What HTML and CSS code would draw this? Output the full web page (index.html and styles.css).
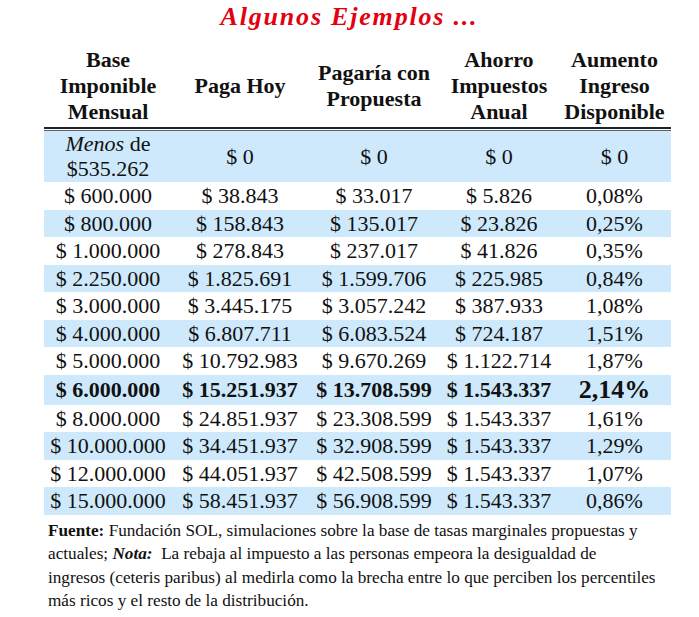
FILE: index.html
```html
<!DOCTYPE html>
<html lang="es">
<head>
<meta charset="utf-8">
<title>Algunos Ejemplos</title>
<link rel="stylesheet" href="styles.css">
</head>
<body>
<div class="page">
  <h1 class="title">Algunos Ejemplos ...</h1>
  <table class="data">
    <colgroup>
      <col class="c1"><col class="c2"><col class="c3"><col class="c4"><col class="c5">
    </colgroup>
    <thead>
      <tr>
        <th>Base<br>Imponible<br>Mensual</th>
        <th>Paga Hoy</th>
        <th>Pagaría con<br>Propuesta</th>
        <th>Ahorro<br>Impuestos<br>Anual</th>
        <th>Aumento<br>Ingreso<br>Disponible</th>
      </tr>
    </thead>
    <tbody>
      <tr class="first blue">
        <td class="two"><em>Menos</em> de<br>$535.262</td>
        <td>$ 0</td><td>$ 0</td><td>$ 0</td><td>$ 0</td>
      </tr>
      <tr><td>$ 600.000</td><td>$ 38.843</td><td>$ 33.017</td><td>$ 5.826</td><td>0,08%</td></tr>
      <tr class="blue"><td>$ 800.000</td><td>$ 158.843</td><td>$ 135.017</td><td>$ 23.826</td><td>0,25%</td></tr>
      <tr><td>$ 1.000.000</td><td>$ 278.843</td><td>$ 237.017</td><td>$ 41.826</td><td>0,35%</td></tr>
      <tr class="blue"><td>$ 2.250.000</td><td>$ 1.825.691</td><td>$ 1.599.706</td><td>$ 225.985</td><td>0,84%</td></tr>
      <tr><td>$ 3.000.000</td><td>$ 3.445.175</td><td>$ 3.057.242</td><td>$ 387.933</td><td>1,08%</td></tr>
      <tr class="blue"><td>$ 4.000.000</td><td>$ 6.807.711</td><td>$ 6.083.524</td><td>$ 724.187</td><td>1,51%</td></tr>
      <tr><td>$ 5.000.000</td><td>$ 10.792.983</td><td>$ 9.670.269</td><td>$ 1.122.714</td><td>1,87%</td></tr>
      <tr class="blue strong"><td>$ 6.000.000</td><td>$ 15.251.937</td><td>$ 13.708.599</td><td>$ 1.543.337</td><td class="big">2,14%</td></tr>
      <tr><td>$ 8.000.000</td><td>$ 24.851.937</td><td>$ 23.308.599</td><td>$ 1.543.337</td><td>1,61%</td></tr>
      <tr class="blue"><td>$ 10.000.000</td><td>$ 34.451.937</td><td>$ 32.908.599</td><td>$ 1.543.337</td><td>1,29%</td></tr>
      <tr><td>$ 12.000.000</td><td>$ 44.051.937</td><td>$ 42.508.599</td><td>$ 1.543.337</td><td>1,07%</td></tr>
      <tr class="blue"><td>$ 15.000.000</td><td>$ 58.451.937</td><td>$ 56.908.599</td><td>$ 1.543.337</td><td>0,86%</td></tr>
    </tbody>
  </table>
  <p class="note"><b>Fuente:</b> Fundación SOL, simulaciones sobre la base de tasas marginales propuestas y<br>actuales; <b><i>Nota:</i></b>&nbsp; La rebaja al impuesto a las personas empeora la desigualdad de<br>ingresos (ceteris paribus) al medirla como la brecha entre lo que perciben los percentiles<br>más ricos y el resto de la distribución.</p>
</div>
</body>
</html>
```
FILE: styles.css
```css
html, body {
  margin: 0;
  padding: 0;
  background: #ffffff;
}
body {
  font-family: "Liberation Serif", "Times New Roman", serif;
  color: #111;
}
.page {
  width: 699px;
  height: 617px;
  overflow: hidden;
}
.title {
  margin: 0;
  padding-top: 2px;
  height: 45px;
  box-sizing: border-box;
  text-align: center;
  font-size: 26px;
  line-height: 30px;
  font-weight: bold;
  font-style: italic;
  letter-spacing: 1.8px;
  color: #e3000f;
}
.data {
  margin-left: 44px;
  width: 627px;
  table-layout: fixed;
  border-collapse: separate;
  border-spacing: 0;
}
.c1 { width: 128px; }
.c2 { width: 136px; }
.c3 { width: 132px; }
.c4 { width: 118px; }
.c5 { width: 113px; }
.data th {
  font-size: 22px;
  line-height: 26px;
  font-weight: bold;
  padding: 2px 0 2px;
  vertical-align: middle;
  text-align: center;
  border-bottom: 2px solid #1e2126;
}
.data td {
  font-size: 22px;
  line-height: 27.5px;
  height: 27.5px;
  padding: 0;
  text-align: center;
  vertical-align: middle;
  white-space: nowrap;
}
.data tr.blue td {
  background: #cde9fb;
}
.data tr.first td {
  border-top: 1px solid #fff;
  box-shadow: inset 0 1px 0 #5b6068;
  height: 52px;
  line-height: 25px;
}
.data tr.strong td {
  font-weight: bold;
  height: 30px;
  line-height: 30px;
}
.data td.big {
  font-size: 26px;
}
.note {
  margin: 4px 0 0 48px;
  width: 645px;
  white-space: nowrap;
  font-size: 17.2px;
  line-height: 23.5px;
  color: #111;
}
```
